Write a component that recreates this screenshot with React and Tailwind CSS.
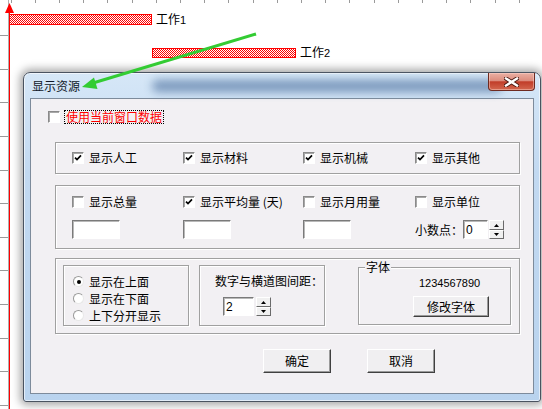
import React from "react";

function Check({ checked }) {
  return (
    <span className="flex h-[12px] w-[12px] shrink-0 items-center justify-center border border-t-[#8a8a8a] border-l-[#8a8a8a] border-b-[#ffffff] border-r-[#ffffff] bg-white shadow-[inset_1px_1px_0_#a8a8a8]">
      {checked && (
        <svg width="8" height="8" viewBox="0 0 8 8">
          <path d="M1 3.6L3 5.6L7 1.4" stroke="#000" strokeWidth="1.7" fill="none" />
        </svg>
      )}
    </span>
  );
}

function CheckItem({ checked, label }) {
  return (
    <div className="flex h-[12px] items-center gap-[5px]">
      <Check checked={checked} />
      <span className="whitespace-nowrap leading-[14px]">{label}</span>
    </div>
  );
}

function Radio({ on }) {
  return (
    <span className="flex h-[11px] w-[11px] shrink-0 items-center justify-center rounded-full border border-t-[#9a9a9a] border-l-[#9a9a9a] border-b-[#e8e8e8] border-r-[#e8e8e8] bg-white">
      {on && <span className="h-[4px] w-[4px] rounded-full bg-black" />}
    </span>
  );
}

function Field({ w, value }) {
  return (
    <div
      className={
        "flex h-[19px] items-center border border-t-[#7a7a7a] border-l-[#7a7a7a] border-b-[#ffffff] border-r-[#ffffff] bg-white pl-[2px] shadow-[inset_1px_1px_0_#b8b8b8] [font-family:'Liberation_Sans',sans-serif] text-[12px] leading-[14px] " +
        w
      }
    >
      {value}
    </div>
  );
}

function SpinBtns() {
  return (
    <div className="flex h-[19px] w-[15px] flex-col">
      <div className="flex h-[10px] items-center justify-center border border-t-white border-l-white border-b-[#6a6a6a] border-r-[#6a6a6a] bg-[#f0f0f0]">
        <svg width="5" height="3" viewBox="0 0 5 3">
          <path d="M2.5 0L5 3H0Z" fill="#000" />
        </svg>
      </div>
      <div className="flex h-[9px] items-center justify-center border border-t-white border-l-white border-b-[#6a6a6a] border-r-[#6a6a6a] bg-[#f0f0f0]">
        <svg width="5" height="3" viewBox="0 0 5 3">
          <path d="M0 0H5L2.5 3Z" fill="#000" />
        </svg>
      </div>
    </div>
  );
}

function Btn({ children, cls }) {
  return (
    <div
      className={
        "flex items-center justify-center border border-t-white border-l-white border-b-[#404040] border-r-[#404040] bg-[#f0eff1] shadow-[inset_-1px_-1px_0_#9a9a9a] " +
        cls
      }
    >
      {children}
    </div>
  );
}

export default function App() {
  const topTicks = [];
  for (let i = 0; i < 23; i++) topTicks.push(10.5 + i * 24.2);
  const leftTicks = [];
  for (let i = 1; i < 13; i++) leftTicks.push(1.5 + i * 33.6);

  return (
    <div className="relative h-[409px] w-[542px] overflow-hidden bg-white text-[12px] leading-[14px] text-black [font-family:'Noto_Sans_CJK_SC',sans-serif]">
      {/* chart grid and bars */}
      <svg className="absolute left-0 top-0" width="542" height="409" shapeRendering="crispEdges">
        <defs>
          <pattern id="hatch" x="0" y="0" width="2" height="2" patternUnits="userSpaceOnUse">
            <rect x="0" y="0" width="2" height="2" fill="#ffffff" />
            <rect x="0" y="0" width="1" height="1" fill="#ff0000" />
            <rect x="1" y="1" width="1" height="1" fill="#ff0000" />
          </pattern>
        </defs>
        {topTicks.map((x, i) => (
          <line key={"t" + i} x1={Math.round(x) + 0.5} y1="0" x2={Math.round(x) + 0.5} y2="3" stroke="#9a9a9a" />
        ))}
        {leftTicks.map((y, i) => (
          <line key={"l" + i} x1="0" y1={Math.round(y) + 0.5} x2="8" y2={Math.round(y) + 0.5} stroke="#9a9a9a" />
        ))}
        <line x1="8.5" y1="0" x2="8.5" y2="409" stroke="#b0b0b0" />
        <line x1="9.5" y1="8" x2="9.5" y2="409" stroke="#ff0000" />
        <path d="M9.5 3L14 13H5Z" fill="#ff0000" shapeRendering="auto" />
        <rect x="9.5" y="14.5" width="142" height="10" fill="url(#hatch)" stroke="#ff0000" />
        <rect x="152.5" y="48.5" width="143" height="9" fill="url(#hatch)" stroke="#ff0000" />
      </svg>

      <div className="absolute left-[156px] top-[12px] whitespace-nowrap leading-[14px]">
        工作<span className="[font-family:'Liberation_Sans',sans-serif] text-[11px]">1</span>
      </div>
      <div className="absolute left-[300px] top-[45px] whitespace-nowrap leading-[14px]">
        工作<span className="[font-family:'Liberation_Sans',sans-serif] text-[11px]">2</span>
      </div>

      {/* dialog window */}
      <div className="absolute left-[23px] top-[72px] flex h-[330px] w-[518px] flex-col rounded-t-[7px] rounded-b-[3px] border border-[#4a5360] bg-[linear-gradient(to_bottom,#d6e7f7_0%,#c2d9f1_30%,#b9d3ee_100%)] shadow-[0_0_9px_3px_rgba(0,0,0,0.35),inset_0_0_0_1px_rgba(255,255,255,0.6)]">
        {/* title bar */}
        <div className="relative flex h-[25px] items-start justify-between pl-[8px] pr-[5px]">
          <div className="absolute left-[128px] top-[7px] h-[12px] w-[350px] rounded-full bg-[#6a8ab2] opacity-85 blur-[5px]" />
          <span className="relative self-center pt-[1px] text-[#101828]">显示资源</span>
          <div className="relative flex h-[18px] w-[47px] items-center justify-center rounded-b-[4px] border border-t-0 border-[#6e2a20] bg-[linear-gradient(to_bottom,#eab0a4_0%,#dc8c7d_45%,#c13d29_52%,#d3674f_100%)] shadow-[inset_0_0_0_1px_rgba(255,220,210,0.45)]">
            <svg width="15" height="10" viewBox="0 0 15 10">
              <path d="M2 1.5L13 8.5M13 1.5L2 8.5" stroke="#4a1810" strokeWidth="4.2" strokeLinecap="square" />
              <path d="M2 1.5L13 8.5M13 1.5L2 8.5" stroke="#ffffff" strokeWidth="2.4" strokeLinecap="square" />
            </svg>
          </div>
        </div>

        {/* client area */}
        <div className="mx-[6px] mb-[7px] flex flex-1 flex-col border border-[#7d8b9b] bg-[#f2f0f3]">
          <div className="ml-[17px] mt-[11px] flex h-[14px] items-center">
            <Check checked={false} />
            <span className="ml-[4px] border border-dotted border-[#000] px-[1px] leading-[12px] text-[#ff0000]">
              使用当前窗口数据
            </span>
          </div>

          {/* group 1 */}
          <div className="ml-[24px] mt-[18px] h-[32px] w-[465px] border border-[#a0a0a0] shadow-[inset_1px_1px_0_#fff,1px_1px_0_#fff]">
            <div className="grid grid-cols-[111px_120px_112px_1fr] pl-[16px] pt-[9px]">
              <CheckItem checked label="显示人工" />
              <CheckItem checked label="显示材料" />
              <CheckItem checked label="显示机械" />
              <CheckItem checked label="显示其他" />
            </div>
          </div>

          {/* group 2 */}
          <div className="ml-[24px] mt-[11px] h-[64px] w-[465px] border border-[#a0a0a0] shadow-[inset_1px_1px_0_#fff,1px_1px_0_#fff]">
            <div className="grid grid-cols-[111px_120px_112px_1fr] pl-[16px] pt-[10px]">
              <CheckItem checked={false} label="显示总量" />
              <CheckItem checked label="显示平均量 (天)" />
              <CheckItem checked={false} label="显示月用量" />
              <CheckItem checked={false} label="显示单位" />
            </div>
            <div className="mt-[12px] grid grid-cols-[111px_120px_112px_1fr] items-center pl-[16px]">
              <Field w="w-[48px]" value="" />
              <Field w="w-[48px]" value="" />
              <Field w="w-[48px]" value="" />
              <div className="flex items-center">
                <span className="w-[48px] whitespace-nowrap">小数点：</span>
                <Field w="w-[25px]" value="0" />
                <div className="ml-[1px]">
                  <SpinBtns />
                </div>
              </div>
            </div>
          </div>

          {/* group 3 */}
          <div className="ml-[24px] mt-[9px] flex h-[76px] w-[465px] items-start border border-[#a0a0a0] pl-[7px] pt-[6px] shadow-[inset_1px_1px_0_#fff,1px_1px_0_#fff]">
            <div className="flex h-[61px] w-[126px] flex-col border border-[#a0a0a0] pl-[9px] pt-[7px] shadow-[inset_1px_1px_0_#fff,1px_1px_0_#fff]">
              <div className="flex h-[17px] items-center gap-[5px]">
                <Radio on />
                <span className="whitespace-nowrap">显示在上面</span>
              </div>
              <div className="flex h-[17px] items-center gap-[5px]">
                <Radio on={false} />
                <span className="whitespace-nowrap">显示在下面</span>
              </div>
              <div className="flex h-[17px] items-center gap-[5px]">
                <Radio on={false} />
                <span className="whitespace-nowrap">上下分开显示</span>
              </div>
            </div>

            <div className="ml-[10px] flex h-[61px] w-[126px] flex-col border border-[#a0a0a0] pl-[15px] pt-[8px] shadow-[inset_1px_1px_0_#fff,1px_1px_0_#fff]">
              <span className="whitespace-nowrap">数字与横道图间距：</span>
              <div className="ml-[8px] mt-[9px] flex items-center gap-[2px]">
                <Field w="w-[31px]" value="2" />
                <SpinBtns />
              </div>
            </div>

            <div className="relative ml-[33px] mt-[2px] flex h-[58px] w-[153px] flex-col border border-[#a0a0a0] pt-[8px] shadow-[inset_1px_1px_0_#fff,1px_1px_0_#fff]">
              <span className="absolute left-[6px] top-[-8px] bg-[#f2f0f3] px-[1px]">字体</span>
              <span className="ml-[60px] [font-family:'Liberation_Sans',sans-serif] text-[11px] leading-[14px]">
                1234567890
              </span>
              <Btn cls="ml-[54px] mt-[6px] h-[21px] w-[76px]">修改字体</Btn>
            </div>
          </div>

          {/* buttons */}
          <div className="ml-[232px] mt-[15px] flex gap-[36px]">
            <Btn cls="h-[24px] w-[68px]">确定</Btn>
            <Btn cls="h-[24px] w-[68px]">取消</Btn>
          </div>
        </div>
      </div>

      {/* green annotation arrow */}
      <svg className="pointer-events-none absolute left-0 top-0" width="542" height="409">
        <line x1="256" y1="34" x2="93" y2="83" stroke="#33cc33" strokeWidth="3" />
        <path d="M82 87L94 77.5L97.5 89Z" fill="#33cc33" />
      </svg>
    </div>
  );
}
